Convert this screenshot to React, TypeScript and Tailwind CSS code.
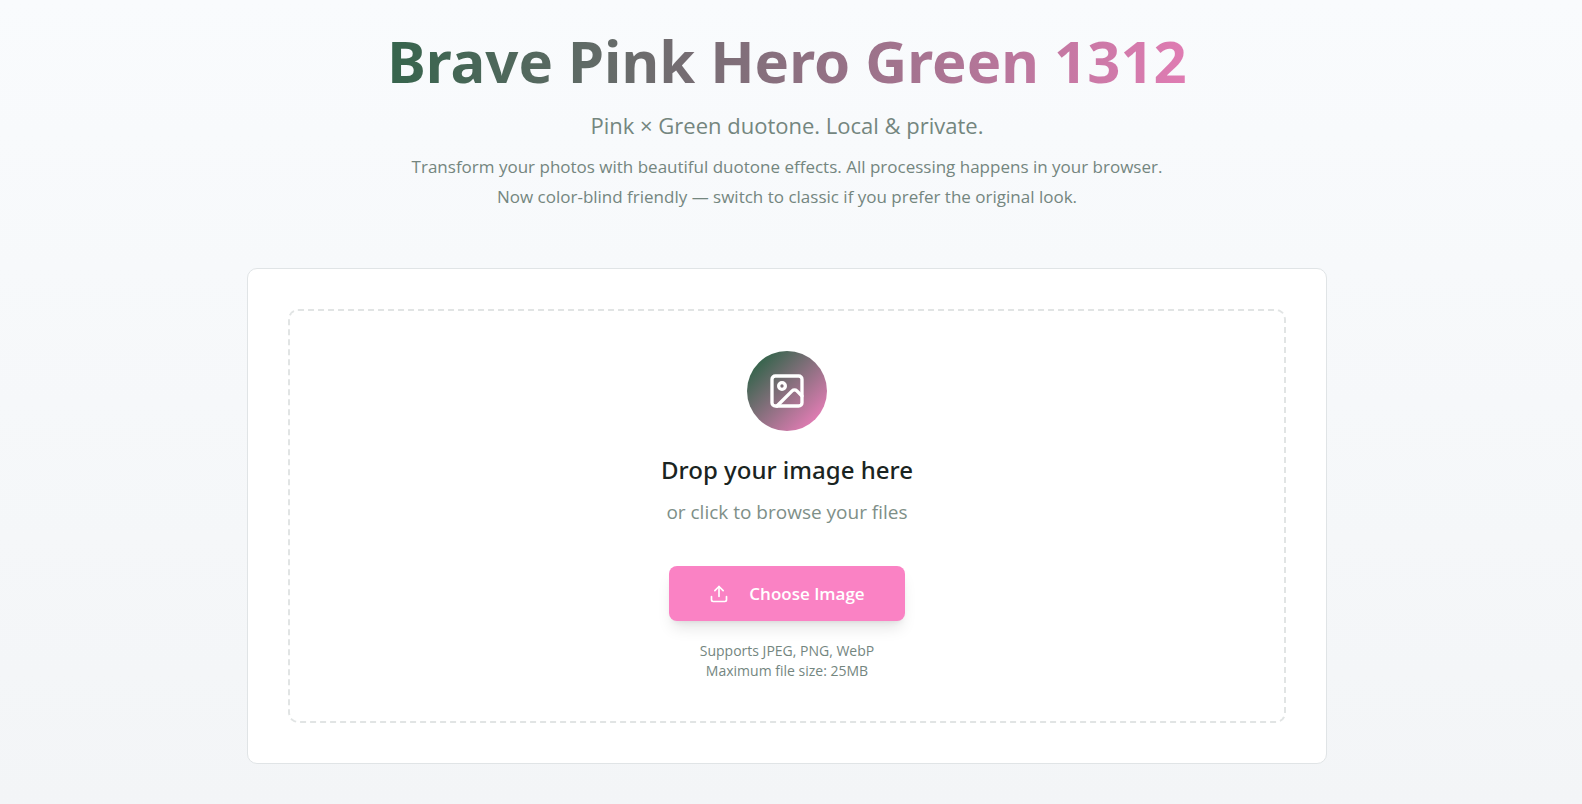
import { Image, Upload } from "lucide-react";
import { useRef } from "react";

function Header() {
  return (
    <header className="flex flex-col items-center text-center text-[#74867f]">
      <h1 className="bg-linear-to-r/srgb from-[#2d6347] to-[#e87db8] bg-clip-text px-10 font-['Noto_Sans',sans-serif] text-[58px] leading-[74px] font-bold text-transparent">
        Brave Pink Hero Green 1312
      </h1>
      <p className="mt-3 text-[22px] leading-[30px]">Pink × Green duotone. Local &amp; private.</p>
      <p className="mt-3 max-w-[840px] text-[17px] leading-[30px]">
        Transform your photos with beautiful duotone effects. All processing happens in your browser.
        <br />
        Now color-blind friendly — switch to classic if you prefer the original look.
      </p>
    </header>
  );
}

function DropZone() {
  const input = useRef<HTMLInputElement>(null);
  return (
    <section className="w-full max-w-[1080px] rounded-[10px] border border-[#e0e4e6] bg-white p-10">
      <div className="flex flex-col items-center rounded-[10px] border-2 border-dashed border-[#e1e4e4] p-10 text-center">
        <div className="flex size-20 items-center justify-center rounded-full bg-linear-to-br/srgb from-[#2d6347] from-10% to-[#e87db8] to-90%">
          <Image className="size-10 text-white" strokeWidth={2} aria-hidden="true" />
        </div>
        <h2 className="mt-5 font-['Noto_Sans',sans-serif] text-[24px] leading-[38px] font-medium text-[#1a2421]">
          Drop your image here
        </h2>
        <p className="mt-2 text-[19px] leading-[30px] text-[#7e8f88]">or click to browse your files</p>
        <button
          type="button"
          onClick={() => input.current?.click()}
          className="mt-[39px] flex h-[55px] items-center gap-5 rounded-lg bg-[#fa82c4] px-10 text-[17px] font-semibold text-white shadow-lg"
        >
          <Upload className="size-5" aria-hidden="true" />
          Choose Image
        </button>
        <input ref={input} type="file" accept="image/jpeg,image/png,image/webp" aria-label="Choose Image" className="hidden" />
        <p className="mt-5 text-[14px] leading-5 text-[#74867f]">
          Supports JPEG, PNG, WebP
          <br />
          Maximum file size: 25MB
        </p>
      </div>
    </section>
  );
}

export default function App() {
  return (
    <main className="flex min-h-screen flex-col items-center gap-14 bg-linear-to-b/srgb from-[#f9fbfd] to-[#f3f5f7] pt-6 pr-2 pb-10 font-['Open_Sans',sans-serif]">
      <Header />
      <DropZone />
    </main>
  );
}
